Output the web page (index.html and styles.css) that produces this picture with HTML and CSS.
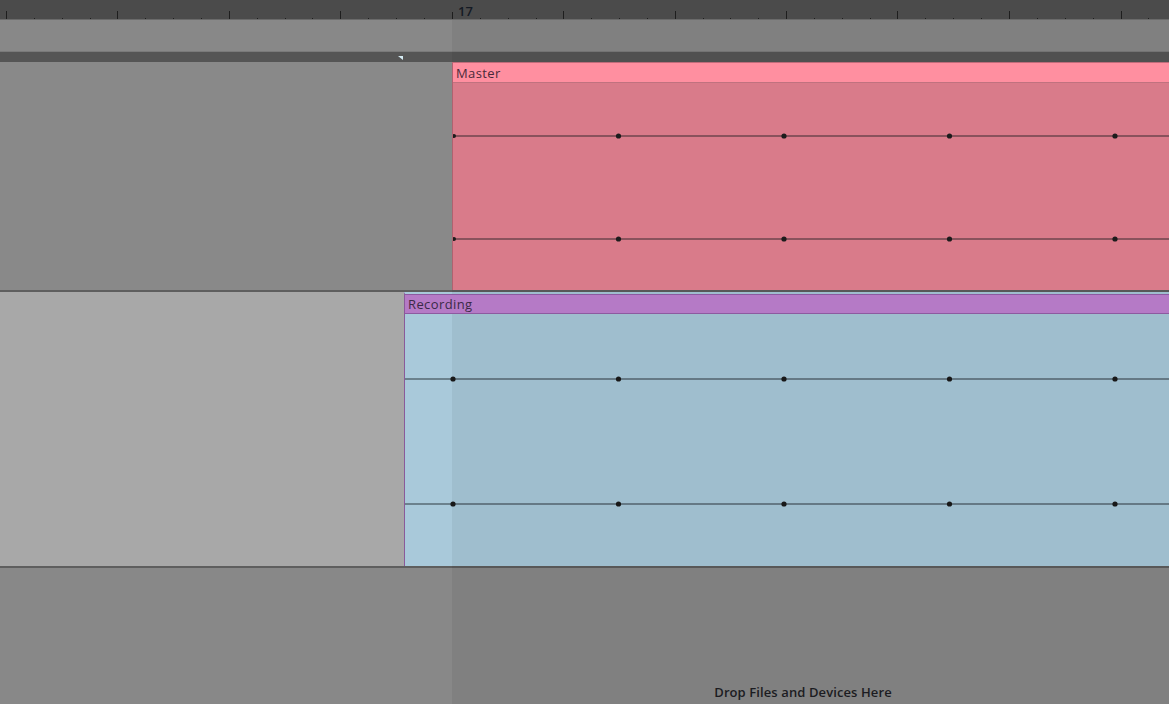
FILE: index.html
```html
<!DOCTYPE html>
<html>
<head>
<meta charset="utf-8">
<link rel="stylesheet" href="styles.css">
</head>
<body>
<div class="arrange">
  <div class="ruler">
    <svg class="ruler-svg" width="1169" height="20" viewBox="0 0 1169 20">
      <g fill="#1e1e1e">
        <rect x="6" y="11" width="1" height="8"/>
        <rect x="34" y="18" width="1" height="1"/><rect x="62" y="18" width="1" height="1"/><rect x="90" y="18" width="1" height="1"/>
        <rect x="117" y="11" width="1" height="8"/>
        <rect x="145" y="18" width="1" height="1"/><rect x="173" y="18" width="1" height="1"/><rect x="201" y="18" width="1" height="1"/>
        <rect x="229" y="11" width="1" height="8"/>
        <rect x="257" y="18" width="1" height="1"/><rect x="285" y="18" width="1" height="1"/><rect x="312" y="18" width="1" height="1"/>
        <rect x="340" y="11" width="1" height="8"/>
        <rect x="368" y="18" width="1" height="1"/><rect x="396" y="18" width="1" height="1"/><rect x="424" y="18" width="1" height="1"/>
        <rect x="452" y="12" width="1" height="7"/>
        <rect x="480" y="18" width="1" height="1"/><rect x="508" y="18" width="1" height="1"/><rect x="536" y="18" width="1" height="1"/>
        <rect x="563" y="11" width="1" height="8"/>
        <rect x="591" y="18" width="1" height="1"/><rect x="619" y="18" width="1" height="1"/><rect x="647" y="18" width="1" height="1"/>
        <rect x="675" y="11" width="1" height="8"/>
        <rect x="703" y="18" width="1" height="1"/><rect x="730" y="18" width="1" height="1"/><rect x="758" y="18" width="1" height="1"/>
        <rect x="786" y="11" width="1" height="8"/>
        <rect x="814" y="18" width="1" height="1"/><rect x="842" y="18" width="1" height="1"/><rect x="870" y="18" width="1" height="1"/>
        <rect x="897" y="11" width="1" height="8"/>
        <rect x="925" y="18" width="1" height="1"/><rect x="953" y="18" width="1" height="1"/><rect x="981" y="18" width="1" height="1"/>
        <rect x="1009" y="11" width="1" height="8"/>
        <rect x="1037" y="18" width="1" height="1"/><rect x="1065" y="18" width="1" height="1"/><rect x="1093" y="18" width="1" height="1"/>
        <rect x="1121" y="11" width="1" height="8"/>
        <rect x="1148" y="18" width="1" height="1"/>
      </g>
    </svg>
    <span class="bar-label">17</span>
  </div>

  <div class="loop-band"></div>
  <div class="marker-band"><span class="marker"></span></div>

  <div class="track master">
    <div class="track-pad pad-master"></div>
    <div class="clip clip-master">
      <div class="clip-head head-master">Master</div>
      <div class="clip-body body-master">
        <svg class="auto" width="717" height="206" viewBox="0 0 717 206">
          <g stroke="#3a2a2e" stroke-width="1.2">
            <line x1="0" y1="53" x2="717" y2="53"/>
            <line x1="0" y1="156" x2="717" y2="156"/>
          </g>
          <g fill="#1c1c1c">
            <circle cx="1" cy="53" r="2"/><circle cx="165.5" cy="53" r="2.6"/><circle cx="331" cy="53" r="2.6"/><circle cx="496.5" cy="53" r="2.6"/><circle cx="662" cy="53" r="2.6"/>
            <circle cx="1" cy="156" r="2"/><circle cx="165.5" cy="156" r="2.6"/><circle cx="331" cy="156" r="2.6"/><circle cx="496.5" cy="156" r="2.6"/><circle cx="662" cy="156" r="2.6"/>
          </g>
        </svg>
      </div>
    </div>
  </div>

  <div class="sep"></div>

  <div class="track recording">
    <div class="track-pad pad-rec"></div>
    <div class="clip clip-rec">
      <div class="clip-head head-rec">Recording</div>
      <div class="clip-body body-rec">
        <svg class="auto" width="764" height="251" viewBox="0 0 764 251">
          <g stroke="#2f3a40" stroke-width="1.2">
            <line x1="0" y1="65" x2="764" y2="65"/>
            <line x1="0" y1="190" x2="764" y2="190"/>
          </g>
          <g fill="#1a1a1a">
            <circle cx="48" cy="65" r="2.6"/><circle cx="213.5" cy="65" r="2.6"/><circle cx="379" cy="65" r="2.6"/><circle cx="544.5" cy="65" r="2.6"/><circle cx="710" cy="65" r="2.6"/>
            <circle cx="48" cy="190" r="2.6"/><circle cx="213.5" cy="190" r="2.6"/><circle cx="379" cy="190" r="2.6"/><circle cx="544.5" cy="190" r="2.6"/><circle cx="710" cy="190" r="2.6"/>
          </g>
        </svg>
      </div>
    </div>
  </div>

  <div class="sep sep2"></div>

  <div class="drop-zone">
    <span class="drop-text">Drop Files and Devices Here</span>
  </div>

  <div class="shade"></div>
</div>
</body>
</html>
```

FILE: styles.css
```css
html, body {
  margin: 0;
  padding: 0;
}
body {
  width: 1169px;
  height: 704px;
  overflow: hidden;
  background: #888888;
  font-family: "Open Sans", "Noto Sans", "Liberation Sans", sans-serif;
}
.arrange {
  position: relative;
  width: 1169px;
  height: 704px;
  display: flex;
  flex-direction: column;
}
.ruler {
  position: relative;
  height: 20px;
  flex: none;
  background: #4b4b4b;
  border-bottom: 1px solid #6a6a6a;
  box-sizing: border-box;
}
.ruler-svg {
  display: block;
}
.bar-label {
  position: absolute;
  left: 458px;
  top: 4px;
  font-size: 13px;
  font-weight: 600;
  line-height: 15px;
  color: #141a24;
}
.loop-band {
  height: 32px;
  flex: none;
  background: #888888;
  box-sizing: border-box;
  border-bottom: 1px solid #7a7a7a;
}
.marker-band {
  position: relative;
  height: 10px;
  flex: none;
  background: #555555;
}
.marker {
  position: absolute;
  left: 398px;
  top: 4px;
  width: 0;
  height: 0;
  border-top: 4px solid #d6ecf4;
  border-left: 5px solid transparent;
}
.track {
  display: flex;
  flex: none;
}
.master {
  height: 228px;
}
.recording {
  height: 274px;
}
.track-pad {
  flex: none;
}
.pad-master {
  width: 452px;
  background: #898989;
}
.pad-rec {
  width: 404px;
  background: #a8a8a8;
}
.clip {
  flex: 1;
  display: flex;
  flex-direction: column;
  min-width: 0;
}
.clip-master {
  position: relative;
  z-index: 2;
  border-top: 1px solid #c06c7a;
  border-left: 1px solid #b06270;
}
.clip-rec {
  border-top: 2px solid #a9c9da;
  border-left: 1px solid #8a5a9a;
}
.clip-head {
  height: 20px;
  flex: none;
  box-sizing: border-box;
  font-size: 13px;
  letter-spacing: 0.4px;
  line-height: 21px;
  padding-left: 3px;
  white-space: nowrap;
}
.head-master {
  background: #ff8fa0;
  color: #4a2a3a;
  border-bottom: 1px solid #c0727f;
}
.head-rec {
  position: relative;
  z-index: 2;
  background: #b57ac6;
  color: #3a2a48;
  border-top: 1px solid #8d5aa0;
  border-bottom: 1px solid #8d5aa0;
  line-height: 19px;
}
.clip-body {
  flex: 1;
  position: relative;
  overflow: hidden;
}
.body-master {
  background: #d97b8a;
}
.body-rec {
  background: #a9c9da;
}
.auto {
  display: block;
}
.sep {
  height: 2px;
  flex: none;
  background: #5e5e5e;
}
.drop-zone {
  flex: 1;
  display: flex;
  align-items: flex-end;
  justify-content: center;
  padding-left: 437px;
  padding-bottom: 4px;
  background: #888888;
}
.drop-text {
  font-size: 13px;
  font-weight: 600;
  letter-spacing: 0.1px;
  color: #1e1e24;
  line-height: 16px;
}
.shade {
  position: absolute;
  left: 452px;
  right: 0;
  top: 20px;
  bottom: 0;
  background: rgba(0, 0, 0, 0.055);
  pointer-events: none;
}
```
